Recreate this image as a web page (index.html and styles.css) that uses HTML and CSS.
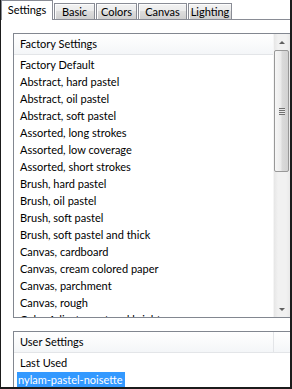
FILE: index.html
```html
<!DOCTYPE html>
<html>
<head>
<meta charset="utf-8">
<link rel="stylesheet" href="styles.css">
</head>
<body>
<div class="window">
  <div class="tabs">
    <div class="tab selected t-settings">Settings</div>
    <div class="tab t-basic">Basic</div>
    <div class="tab t-colors">Colors</div>
    <div class="tab t-canvas">Canvas</div>
    <div class="tab t-lighting">Lighting</div>
  </div>
  <div class="panel">
    <div class="listbox main">
      <div class="listcol">
        <div class="header">Factory Settings</div>
        <div class="rows">
          <div class="row">Factory Default</div>
          <div class="row">Abstract, hard pastel</div>
          <div class="row">Abstract, oil pastel</div>
          <div class="row">Abstract, soft pastel</div>
          <div class="row">Assorted, long strokes</div>
          <div class="row">Assorted, low coverage</div>
          <div class="row">Assorted, short strokes</div>
          <div class="row">Brush, hard pastel</div>
          <div class="row">Brush, oil pastel</div>
          <div class="row">Brush, soft pastel</div>
          <div class="row">Brush, soft pastel and thick</div>
          <div class="row">Canvas, cardboard</div>
          <div class="row">Canvas, cream colored paper</div>
          <div class="row">Canvas, parchment</div>
          <div class="row">Canvas, rough</div>
          <div class="row">Color Adjust, most and bright</div>
        </div>
      </div>
      <div class="scrollbar">
        <div class="sbtn"><span class="arrow up"></span></div>
        <div class="track">
          <div class="thumb"><span class="grip"></span></div>
        </div>
        <div class="sbtn"><span class="arrow down"></span></div>
      </div>
    </div>
    <div class="listbox user">
      <div class="listcol">
        <div class="header">User Settings<span class="hdiv"></span></div>
        <div class="rows">
          <div class="row">Last Used</div>
          <div class="row"><span class="sel">nylam-pastel-noisette</span></div>
        </div>
      </div>
    </div>
  </div>
</div>
</body>
</html>
```
FILE: styles.css
```css
html, body {
  margin: 0;
  padding: 0;
  background: #fff;
}
.window {
  width: 292px;
  height: 389px;
  box-sizing: border-box;
  border-left: 1px solid #1b1b1b;
  border-right: 2px solid #1b1b1b;
  border-bottom: 2px solid #1b1b1b;
  background: #fff;
  overflow: hidden;
  display: flex;
  flex-direction: column;
  font-family: Lato, "Noto Sans", sans-serif;
  font-size: 11px;
  color: #000;
}
.tabs {
  display: flex;
  align-items: flex-end;
  height: 19px;
  border-bottom: 1px solid #898c95;
  flex: none;
}
.tab {
  box-sizing: border-box;
  height: 16px;
  line-height: 15px;
  padding: 0;
  text-align: center;
  border: 1px solid #898c95;
  border-bottom: none;
  background: linear-gradient(#f2f2f2, #ebebeb 50%, #dddddd 50%, #cfcfcf);
  box-shadow: inset 1px 1px 0 #fcfcfc;
  white-space: nowrap;
}
.tab + .tab {
  margin-left: 1px;
}
.tab.selected {
  height: 20px;
  line-height: 17px;
  margin-bottom: -1px;
  background: #fff;
  box-shadow: none;
}
.t-settings { width: 52px; }
.t-basic { width: 41px; }
.t-colors { width: 41px; }
.t-canvas { width: 49px; }
.t-lighting { width: 44px; }
.panel {
  flex: 1;
  display: flex;
  flex-direction: column;
  padding: 13px 0 0 12px;
  min-height: 0;
}
.listbox {
  display: flex;
  border: 1px solid #828790;
  border-right: none;
  background: #fff;
  overflow: hidden;
}
.listbox.main {
  height: 283px;
  flex: none;
}
.listbox.user {
  margin-top: 13px;
  flex: 1;
  border-bottom: none;
}
.listcol {
  flex: 1;
  overflow: hidden;
  min-width: 0;
}
.header {
  position: relative;
  height: 20px;
  line-height: 20px;
  padding-left: 6px;
  background: linear-gradient(#ffffff, #f4f6f8);
  border-bottom: 1px solid #e3e5e8;
}
.hdiv {
  position: absolute;
  right: 0;
  top: 0;
  width: 16px;
  height: 20px;
  border-left: 1px solid #e3e5e8;
}
.rows {
  padding-top: 1px;
}
.row {
  height: 17px;
  line-height: 17px;
  padding-left: 6px;
  white-space: nowrap;
}
.sel {
  display: inline-block;
  background: #3399ff;
  color: #fff;
  margin-left: -3px;
  padding: 0 2px 0 1px;
  line-height: 15px;
}
.scrollbar {
  width: 16px;
  flex: none;
  display: flex;
  flex-direction: column;
  background: linear-gradient(to right, #e6e6e6, #f1f1f1 25%, #f1f1f1 75%, #e9e9e9);
  border-left: 1px solid #f5f5f5;
}
.sbtn {
  height: 16px;
  flex: none;
  display: flex;
  align-items: center;
  justify-content: center;
}
.arrow {
  width: 0;
  height: 0;
  border-left: 3px solid transparent;
  border-right: 3px solid transparent;
}
.arrow.up {
  border-bottom: 3px solid #606060;
}
.arrow.down {
  border-top: 3px solid #606060;
}
.track {
  flex: 1;
}
.thumb {
  height: 122px;
  margin: 0 1px 0 0;
  box-sizing: border-box;
  border: 1px solid #989898;
  border-radius: 2px;
  background: linear-gradient(to right, #f6f6f6, #ebebeb 45%, #dadada 55%, #d2d2d2);
  display: flex;
  align-items: center;
  justify-content: center;
}
.grip {
  width: 6px;
  height: 7px;
  background: repeating-linear-gradient(#707070 0 1px, #e8e8e8 1px 2px);
}
```
